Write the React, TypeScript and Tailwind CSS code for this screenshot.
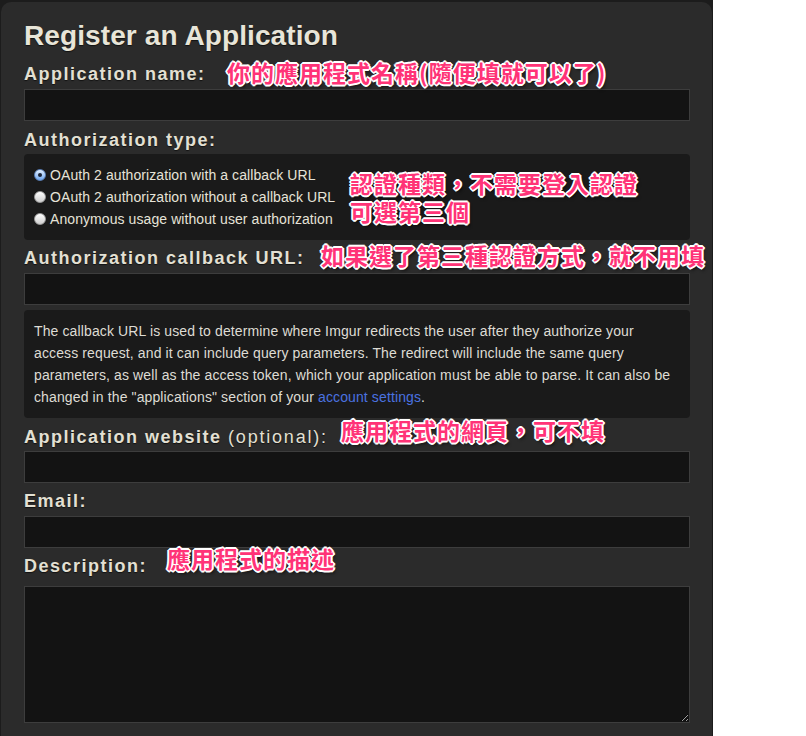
import React from 'react';

const labelCls =
  "block font-['Liberation_Sans',Arial,sans-serif] font-bold text-[18px] leading-[24px] tracking-[1.5px] text-[#e3e0d3] [text-shadow:0_1px_1px_rgba(0,0,0,0.6)]";

const inputCls =
  'block w-full h-[32px] bg-[#131313] border border-[#3d3d3d] outline-none text-[#ddd] px-2';

const noteCls =
  "absolute whitespace-nowrap font-['Noto_Sans_CJK_TC','Noto_Sans_CJK_SC',sans-serif] font-bold text-[23px] leading-[28px] tracking-[1px] text-[#ff3377] [text-shadow:1px_1px_0_#fff,-1px_-1px_0_#fff,1px_-1px_0_#fff,-1px_1px_0_#fff,2px_0_0_#fff,-2px_0_0_#fff,0_2px_0_#fff,0_-2px_0_#fff,2px_3px_3px_rgba(0,0,0,0.55)]";

const Radio = ({ checked }: { checked?: boolean }) =>
  checked ? (
    <span className="relative inline-flex w-[12px] h-[12px] rounded-full border border-[#5b7fb5] bg-linear-to-b from-[#e3f0ff] to-[#6ea6ee] items-center justify-center">
      <span className="w-[4px] h-[4px] rounded-full bg-[#1b2436]" />
    </span>
  ) : (
    <span className="inline-block w-[12px] h-[12px] rounded-full border border-[#9a9a9a] bg-linear-to-b from-white to-[#cfcfcf]" />
  );

export default function App() {
  const authOptions = [
    { label: 'OAuth 2 authorization with a callback URL', checked: true },
    { label: 'OAuth 2 authorization without a callback URL', checked: false },
    { label: 'Anonymous usage without user authorization', checked: false },
  ];

  return (
    <div className="relative w-[713px] h-[736px] overflow-hidden bg-[#1c1c1c] pt-[2px] pl-[1px] font-['Liberation_Sans',Arial,sans-serif]">
      <div className="w-[711px] min-h-[760px] rounded-t-[10px] bg-[#2b2b2b] pl-[23px] pr-[22px] pt-[16px]">
        {/* Title */}
        <h1 className="font-bold text-[28px] leading-[36px] tracking-[0.1px] text-[#e8e5d8] [text-shadow:0_1px_1px_rgba(0,0,0,0.6)]">
          Register an Application
        </h1>

        <label className={`${labelCls} mt-[8px]`}>Application name:</label>
        <input className={`${inputCls} mt-[3px]`} />

        <label className={`${labelCls} mt-[7px]`}>Authorization type:</label>
        <div className="mt-[2px] h-[86px] rounded-[4px] bg-[#1a1a1a] py-[10px] pl-[10px]">
          {authOptions.map((o) => (
            <div key={o.label} className="flex items-center h-[22px] gap-[4px]">
              <Radio checked={o.checked} />
              <span className="text-[14px] tracking-[0.08px] text-[#e6e3d8]">{o.label}</span>
            </div>
          ))}
        </div>

        <label className={`${labelCls} mt-[6px]`}>Authorization callback URL:</label>
        <input className={`${inputCls} mt-[3px]`} />

        <div className="mt-[5px] rounded-[4px] bg-[#1a1a1a] px-[10px] py-[10px] text-[14px] tracking-[0.12px] leading-[22px] text-[#dedcd4]">
          The callback URL is used to determine where Imgur redirects the user after they authorize
          your access request, and it can include query parameters. The redirect will include the
          same query parameters, as well as the access token, which your application must be able to
          parse. It can also be changed in the "applications" section of your{' '}
          <a className="text-[#4a72e0]">account settings</a>.
        </div>

        <label className={`${labelCls} mt-[7px]`}>
          Application website <span className="font-normal tracking-[1.8px]">(optional):</span>
        </label>
        <input className={`${inputCls} mt-[2px]`} />

        <label className={`${labelCls} mt-[6px]`}>Email:</label>
        <input className={`${inputCls} mt-[3px]`} />

        <label className={`${labelCls} mt-[6px]`}>Description:</label>
        <textarea className="block w-full h-[137px] mt-[8px] bg-[#131313] border border-[#3d3d3d] outline-none text-[#ddd] p-2" />
      </div>

      {/* Annotations */}
      <div className={`${noteCls} left-[227px] top-[58px]`}>你的應用程式名稱(隨便填就可以了)</div>
      <div className={`${noteCls} left-[350px] top-[169px]`}>
        認證種類，不需要登入認證
        <br />
        可選第三個
      </div>
      <div className={`${noteCls} left-[321px] top-[241px]`}>如果選了第三種認證方式，就不用填</div>
      <div className={`${noteCls} left-[341px] top-[416px]`}>應用程式的網頁，可不填</div>
      <div className={`${noteCls} left-[167px] top-[544px]`}>應用程式的描述</div>
    </div>
  );
}
